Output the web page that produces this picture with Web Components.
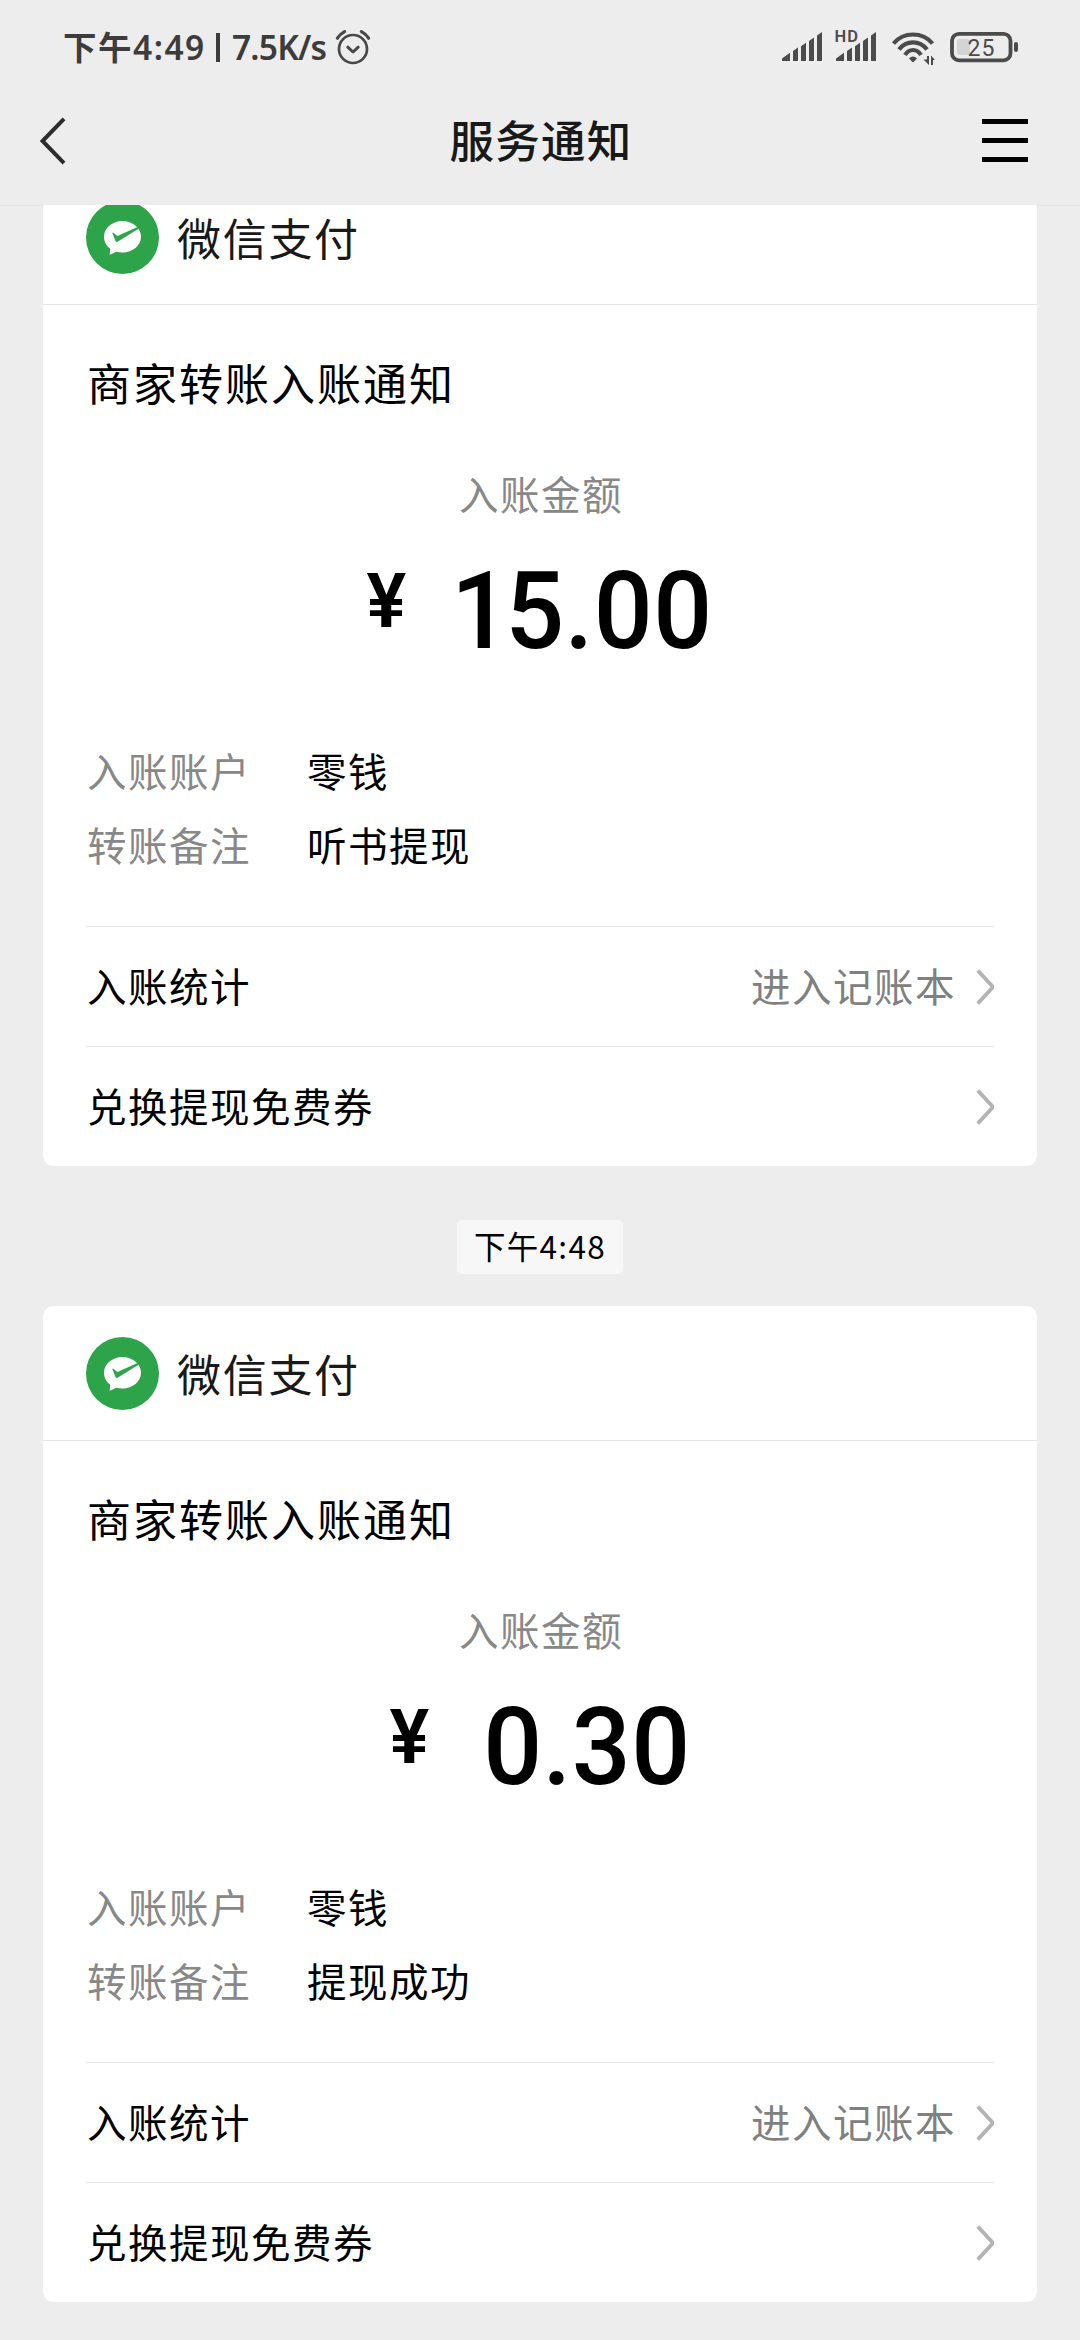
<!DOCTYPE html>
<html lang="zh-CN">
<head>
<meta charset="utf-8">
<title>服务通知</title>
<style>
html,body{margin:0;height:2340px;overflow:hidden;background:#ededed}
body{font-family:"Noto Sans","Noto Sans CJK SC",sans-serif;color:#000}
</style>
</head>
<body>
<notice-screen>
  <status-bar slot="status" clock="下午4:49" speed="7.5K/s" battery="25"></status-bar>
  <nav-bar slot="nav">服务通知</nav-bar>
  <notice-card amount="15.00" class="narrow">
    <span slot="sender">微信支付</span>
    <span slot="title">商家转账入账通知</span>
    <info-row label="入账账户">零钱</info-row>
    <info-row label="转账备注">听书提现</info-row>
    <link-row slot="links" label="入账统计">进入记账本</link-row>
    <link-row slot="links" label="兑换提现免费券"></link-row>
  </notice-card>
  <time-chip>下午4:48</time-chip>
  <notice-card amount="0.30">
    <span slot="sender">微信支付</span>
    <span slot="title">商家转账入账通知</span>
    <info-row label="入账账户">零钱</info-row>
    <info-row label="转账备注">提现成功</info-row>
    <link-row slot="links" label="入账统计">进入记账本</link-row>
    <link-row slot="links" label="兑换提现免费券"></link-row>
  </notice-card>
</notice-screen>
<script>
function define(name, html) {
  customElements.define(name, class extends HTMLElement {
    constructor() {
      super();
      const fill = html.replace(/\{(\w+)\}/g, (m, key) => this.getAttribute(key) || '');
      this.attachShadow({ mode: 'open' }).innerHTML = fill;
    }
  });
}

define('notice-screen', `
<style>
:host{display:flex;flex-direction:column;width:1080px;height:2340px;background:#ededed;overflow:hidden}
.feed{flex:1;min-height:0;overflow:hidden;display:flex;flex-direction:column;align-items:center;box-shadow:inset 0 1px 0 #e4e4e4}
.feed ::slotted(notice-card:first-of-type){margin-top:-35px}
</style>
<slot name="status"></slot>
<slot name="nav"></slot>
<div class="feed"><slot></slot></div>`);

define('status-bar', `
<style>
:host{display:flex;align-items:center;justify-content:space-between;height:94px;flex:none;padding:0 62px 0 63px;box-sizing:border-box;color:#3c3c3c}
.side{display:flex;align-items:center;height:94px}
.clock,.speed{font:600 33.5px/94px "Noto Sans","Noto Sans CJK SC",sans-serif;white-space:nowrap}
.clock{letter-spacing:1.5px;width:153px}
.bar{width:4px;height:29px;background:#3c3c3c;margin-right:12px;margin-top:1px}
.speed{width:103px;letter-spacing:-.8px}
svg{display:block;flex:none}
</style>
<div class="side">
  <span class="clock">{clock}</span><span class="bar"></span><span class="speed">{speed}</span>
  <svg width="36" height="36" viewBox="0 0 36 36" fill="none" stroke="#484848" stroke-linecap="round" stroke-linejoin="round">
    <circle cx="18" cy="20" r="14" stroke-width="2.7"/>
    <path d="M12.8 18.2 18 23l5.2-4.8" stroke-width="3"/>
    <path d="M2.400 9.200Q5 5 9.600 2.600M33.600 9.200Q31 5 26.400 2.600" stroke-width="3.200"/>
  </svg>
</div>
<div class="side">
  <svg width="237" height="94" viewBox="780 0 237 94" fill="#4b4b4b">
    <path d="M781 61v-2.500l8-5.800V61zM792 61V51l5-3.400V61zM800 61V46.200l5-3.400V61zM808 61V41l5-3.500V61zM816 61V35.500l5-3.500V61z"/>
    <path d="M835 61v-2.500l8-5.800V61zM846 61V51l5-3.400V61zM854 61V46.200l5-3.400V61zM862 61V41l5-3.500V61zM870 61V35.500l5-3.500V61z"/>
    <text x="833.500" y="42" font-family="Roboto,sans-serif" font-size="16.500" font-weight="600" textLength="23.500">HD</text>
    <g fill="none" stroke="#4b4b4b" stroke-width="4.200">
      <path d="M892.500 43.500Q900 34.500 912 34.500T931.500 43.500"/>
      <path d="M898 49.500Q903.500 42.300 912 42.300T926 49.500"/>
      <path d="M904 55Q907 50 912 50T920 55"/>
    </g>
    <path d="M908 58.500Q912 54.500 916 58.500L912.800 61.800Q912 62.500 911.200 61.800Z"/>
    <path d="M926 56h2v9L922.500 59.500H926zM930 65V55.500l4 4.500h-2v5z"/>
    <rect x="951" y="33.800" width="58.500" height="26.500" rx="7" fill="none" stroke="#4b4b4b" stroke-width="3.800"/>
    <rect x="956" y="39" width="13" height="16" rx="3" fill="#d4d4d4"/>
    <rect x="1013" y="42" width="4" height="10" rx="2"/>
    <text x="966.500" y="56" font-family="Roboto,sans-serif" font-size="23" font-weight="400" textLength="27">{battery}</text>
  </svg>
</div>`);

define('nav-bar', `
<style>
:host{display:flex;align-items:center;justify-content:space-between;height:111px;flex:none;padding:0 52px 17px 40px;box-sizing:border-box}
h1{margin:-4px 0 0 32px;font:500 44.500px/90px "Noto Sans CJK SC",sans-serif;letter-spacing:1.200px;color:#191919}
svg{display:block;flex:none}
.burger{display:flex;flex-direction:column;gap:14px;width:46px;margin-top:-2px}
.burger i{height:5px;background:#000}
</style>
<svg width="28" height="48" viewBox="0 0 28 48"><path d="M24 1.800 2.500 24 24 46.200" fill="none" stroke="#2c2c2c" stroke-width="4"/></svg>
<h1><slot></slot></h1>
<div class="burger"><i></i><i></i><i></i></div>`);

define('pay-logo', `
<style>:host{display:block;width:73px;height:73px;flex:none}svg{display:block}</style>
<svg width="73" height="73" viewBox="0 0 73 73">
  <circle cx="36.500" cy="36.500" r="36.500" fill="#2ea44a"/>
  <path d="M36.500 20C26.500 20 18 26.800 18 35.800c0 5 2.400 9 6 11.800l.3.600-.6 4.800q0 .8.800.5l5.700-2.700c2 .5 4 .8 6.300.8 10.300 0 18.500-7 18.500-15.800S46.500 20 36.500 20z" fill="#fff"/>
  <path d="M53.800 27 31.500 40.700q-1.200.7-1.900-.5L26.500 32.200q-.2-1 .8-.5l3.500 2.700q.8.500 1.800.1L52 25.700z" fill="#2ea44a"/>
</svg>`);

define('notice-card', `
<style>
:host{display:block;width:994px;height:996px;flex:none;background:#fff;border-radius:11px}
.head{display:flex;align-items:center;gap:18px;height:134px;padding:0 43px;border-bottom:1px solid #e4e4e4;color:#191919;font:400 44px/60px "Noto Sans CJK SC",sans-serif;letter-spacing:1.700px}
.body{display:flex;flex-direction:column;padding:0 43px}
.title{margin-top:44px;padding-left:1px;height:68px;font:400 44px/66px "Noto Sans CJK SC",sans-serif;letter-spacing:2px}
.caption{margin-top:46px;text-align:center;height:63px;font:400 39.500px/60px "Noto Sans CJK SC",sans-serif;letter-spacing:1.500px;color:#888;padding-left:2px}
.money{display:flex;justify-content:center;align-items:flex-start;height:126px;margin-top:22px;font-family:Roboto,sans-serif;font-weight:500}
.yen{font-size:76px;line-height:80px;width:46px;margin-top:13px;margin-right:48px;display:flex;justify-content:center;font-weight:600}
.yen b{font-weight:600;display:block;transform:scaleX(.98)}
.value{display:block;font-size:107px;line-height:127px;letter-spacing:.4px;transform:scaleX(.97)}
:host(.narrow) .value{margin-left:-10px}
:host(.narrow) .value::first-letter{letter-spacing:-5px}
.info{margin-top:60px;height:192px;display:flex;flex-direction:column}
</style>
<div class="head"><pay-logo></pay-logo><slot name="sender"></slot></div>
<div class="body">
  <div class="title"><slot name="title"></slot></div>
  <div class="caption">入账金额</div>
  <div class="money"><span class="yen"><b>¥</b></span><span class="value">{amount}</span></div>
  <div class="info"><slot></slot></div>
  <slot name="links"></slot>
</div>`);

define('info-row', `
<style>
:host{display:flex;height:74px;font:400 39.500px/71px "Noto Sans CJK SC",sans-serif;letter-spacing:1.500px;padding-left:1px}
.label{width:220px;color:#888}
</style>
<span class="label">{label}</span><span><slot></slot></span>`);

define('link-row', `
<style>
:host{display:flex;height:119px;border-top:1px solid #e4e4e4;font:400 39.500px/116px "Noto Sans CJK SC",sans-serif;letter-spacing:1.500px;padding-left:1px}
.label{flex:1}
.hint{color:#808080;margin-right:20px}
svg{display:block;margin-top:42px}
</style>
<span class="label">{label}</span><span class="hint"><slot></slot></span>
<svg width="18" height="36" viewBox="0 0 18 36"><path d="M1.800 1.500 17 18 1.800 34.500" fill="none" stroke="#b4b4b4" stroke-width="4"/></svg>`);

define('time-chip', `
<style>
:host{display:flex;align-items:center;justify-content:center;width:166px;height:54px;margin:54px 0 32px;flex:none;border-radius:5px;background:#f7f7f7;font:400 31.500px/50px "Noto Sans CJK SC",sans-serif;letter-spacing:1.300px}
span{display:block;height:54px}
</style>
<span><slot></slot></span>`);
</script>
</body>
</html>
